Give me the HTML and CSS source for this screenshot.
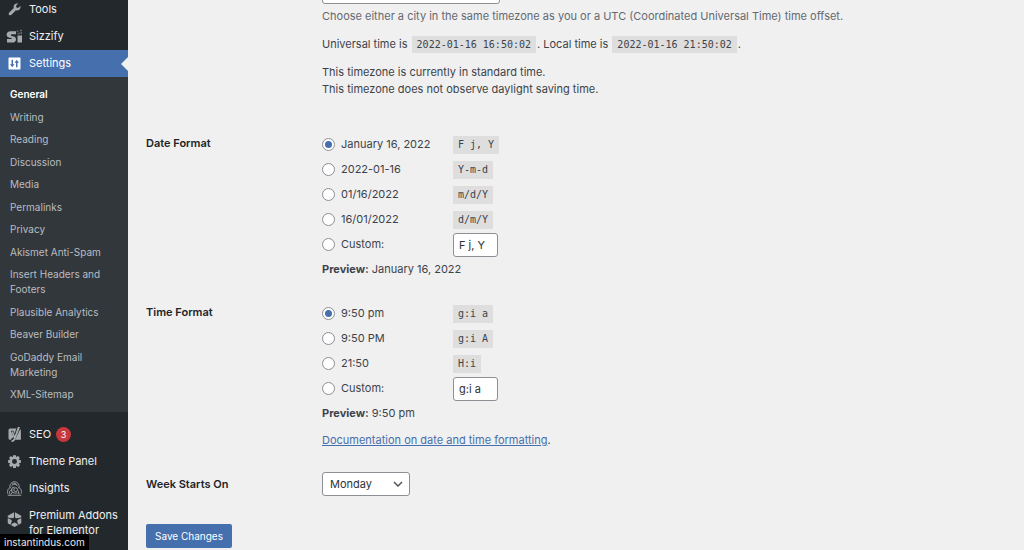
FILE: index.html
```html
<!DOCTYPE html>
<html lang="en">
<head>
<meta charset="utf-8">
<meta name="viewport" content="width=device-width, initial-scale=1">
<title>General Settings</title>
<link rel="stylesheet" href="styles.css">
</head>
<body>
<div class="admin">
  <nav class="sidebar" aria-label="Main menu">
    <a class="item" href="#"><svg class="icon" viewBox="0 0 20 20"><path d="M16.700 9.900c-1.300 1.300-3.200 1.600-4.800 1L5.600 17.200c-.8.8-2 .8-2.800 0s-.8-2 0-2.800L9.100 8.100c-.6-1.600-.3-3.500 1-4.800 1.300-1.300 3.100-1.600 4.700-1L12 5.100l.6 2.300 2.300.6 2.800-2.800c.6 1.600.3 3.400-1 4.700z"/></svg>Tools</a>
    <a class="item" href="#"><svg class="icon" viewBox="0 0 20 20"><path d="M12 7V3H5C1.500 3-.5 5-.5 7.500c0 2.500 1.700 3.600 4.500 4 1.800.3 2.400.5 2.400 1.100 0 .6-.4.800-1.200.800H0V18h6.500c3.700 0 5.500-1.800 5.500-4.500 0-2.500-1.700-3.600-4.500-4C5.700 9.200 5 9 5 8.300 5 7.500 5.500 7 6.500 7zM14 8.500h6V18h-6z"/><path class="dim" d="M13 2h2v2h-2zM17 1h3v2h-3zM14 5h3v2h-3zM18 4h2v3h-2z"/></svg>Sizzify</a>
    <a class="item current" href="#"><svg class="icon" viewBox="0 0 20 20"><path fill-rule="evenodd" d="M3 2h14q1 0 1 1v14q0 1-1 1H3q-1 0-1-1V3q0-1 1-1zM6 5v6H4l3 4 3-4H8V5zM12 15h2V9h2l-3-4-3 4h2z"/></svg>Settings</a>
    <ul class="submenu">
      <li><a class="selected" href="#">General</a></li>
      <li><a href="#">Writing</a></li>
      <li><a href="#">Reading</a></li>
      <li><a href="#">Discussion</a></li>
      <li><a href="#">Media</a></li>
      <li><a href="#">Permalinks</a></li>
      <li><a href="#">Privacy</a></li>
      <li><a href="#">Akismet Anti-Spam</a></li>
      <li><a href="#">Insert Headers and Footers</a></li>
      <li><a href="#">Plausible Analytics</a></li>
      <li><a href="#">Beaver Builder</a></li>
      <li><a href="#">GoDaddy Email Marketing</a></li>
      <li><a href="#">XML-Sitemap</a></li>
    </ul>
    <a class="item" href="#"><svg class="icon" viewBox="0 0 20 20"><path d="M4 2h8.500L10 9 8.500 5H5l3.500 8c-.5 1.500-1.300 2-2.700 2v2H4q-2 0-2-2V4q0-2 2-2zM17.500 3q1 .5 1 2v12H10.500c1-1 1.500-2 2.100-3.600z"/><path d="M14.500 0h2.800l-6 16c-1 2.700-2.300 4-5.300 4v-2.500c1.700 0 2.600-.7 3.200-2.500L5.800 6H8l2.300 5.500z"/></svg>SEO<span class="badge">3</span></a>
    <a class="item" href="#"><svg class="icon" viewBox="0 0 20 20"><path fill-rule="evenodd" d="M18.500 12V8h-2.200l-.5-1.200 1.500-1.600-2.800-2.800-1.600 1.500L12 3.400V1.500H8v2l-1.200.5-1.600-1.500-2.700 2.700L4 6.800 3.500 8h-2v4h2l.5 1.200-1.500 1.600 2.700 2.700L6.800 16l1.200.5v2h4v-2l1.200-.5 1.600 1.500 2.700-2.700-1.500-1.600.4-1.200zM10 6.700a3.300 3.300 0 1 1 0 6.600 3.300 3.300 0 0 1 0-6.600z"/></svg>Theme Panel</a>
    <a class="item" href="#"><svg class="icon line" viewBox="0 0 20 20"><path d="M4 9C3 4 7 1 10 1s7 3 6 8M7 4c2-2 5-1 6 1M6 7c1-3 6-4 8 0M1 17c-1-5 1-8 4-8M19 17c1-5-1-8-4-8M1 19h18M4 18c-2-4 0-6 3-6M10 8a4 4 0 0 0 0 8h4M7 15l-2 3M15 13l1 5"/><circle cx="11.500" cy="11.500" r="2.500"/></svg>Insights</a>
    <a class="item wrap" href="#"><svg class="icon" viewBox="0 0 20 20"><path fill-rule="evenodd" d="M10 0l9 5v10l-9 5-9-5V5zM10 5L8.500 8.200 3 8l3.500 3.500L5.500 16 10 14l4.500 2-1-4.500L17 8l-5.500.2z"/><path class="cut" d="M10 0v6M0 7.500l5 1.500M20 7.500l-5 1.500M4 19l3-5M16 19l-3-5"/></svg>Premium Addons for Elementor</a>
  </nav>

  <main class="content">
    <form>
      <div class="row">
        <div class="heading"></div>
        <div class="field">
          <select class="zone" aria-label="Timezone"><option></option></select>
          <p class="hint">Choose either a city in the same timezone as you or a UTC (Coordinated Universal Time) time offset.</p>
          <p>Universal time is <code>2022-01-16 16:50:02</code>. Local time is <code>2022-01-16 21:50:02</code>.</p>
          <p>This timezone is currently in standard time.<br>This timezone does not observe daylight saving time.</p>
        </div>
      </div>

      <div class="row dates" role="radiogroup" aria-labelledby="date-title">
        <div class="heading" id="date-title">Date Format</div>
        <div class="field">
          <div class="option"><label><input type="radio" name="date" checked>January 16, 2022</label><code>F j, Y</code></div>
          <div class="option"><label><input type="radio" name="date">2022-01-16</label><code>Y-m-d</code></div>
          <div class="option"><label><input type="radio" name="date">01/16/2022</label><code>m/d/Y</code></div>
          <div class="option"><label><input type="radio" name="date">16/01/2022</label><code>d/m/Y</code></div>
          <div class="option"><label><input type="radio" name="date">Custom:</label><input class="custom" type="text" value="F j, Y" aria-label="Custom date format"></div>
          <div class="preview"><strong>Preview:</strong> January 16, 2022</div>
        </div>
      </div>

      <div class="row times" role="radiogroup" aria-labelledby="time-title">
        <div class="heading" id="time-title">Time Format</div>
        <div class="field">
          <div class="option"><label><input type="radio" name="time" checked>9:50 pm</label><code>g:i a</code></div>
          <div class="option"><label><input type="radio" name="time">9:50 PM</label><code>g:i A</code></div>
          <div class="option"><label><input type="radio" name="time">21:50</label><code>H:i</code></div>
          <div class="option"><label><input type="radio" name="time">Custom:</label><input class="custom" type="text" value="g:i a" aria-label="Custom time format"></div>
          <div class="preview"><strong>Preview:</strong> 9:50 pm</div>
          <p class="docs"><a href="#">Documentation on date and time formatting</a>.</p>
        </div>
      </div>

      <div class="row week">
        <label class="heading" for="week">Week Starts On</label>
        <div class="field"><select id="week"><option>Monday</option></select></div>
      </div>

      <button class="save" type="submit">Save Changes</button>
    </form>
  </main>
</div>
<div class="status">instantindus.com</div>
</body>
</html>
```
FILE: styles.css
```css
* {
  box-sizing: border-box;
}

body {
  margin: 0;
  height: 100vh;
  overflow: hidden;
  background: #f0f0f0;
  color: #3c434a;
  font: 11px/17px Inter, sans-serif;
}

.admin {
  display: flex;
  min-height: 100vh;
}

.sidebar {
  flex: 0 0 128px;
  background: #23282d;
}

.item {
  display: flex;
  align-items: center;
  gap: 7px;
  min-height: 27px;
  padding: 0 8px 0 7px;
  color: #f0f0f1;
  font-size: 11px;
  line-height: 15px;
  text-decoration: none;
}

.item:first-child {
  margin-top: -4px;
}

.icon {
  flex: none;
  width: 15px;
  height: 15px;
  overflow: visible;
  fill: #a7aaad;
}

.icon .dim {
  opacity: 0.5;
}

.icon .cut {
  stroke: #23282d;
  stroke-width: 1.2;
}

.icon.line {
  fill: none;
  stroke: #a7aaad;
  stroke-width: 1.2;
}

.current {
  position: relative;
  background: #466fae;
  color: #fff;
}

.current .icon {
  fill: #fff;
}

.current::after {
  content: "";
  position: absolute;
  right: 0;
  top: 7px;
  border: 7px solid transparent;
  border-left-width: 0;
  border-right-color: #f0f0f0;
}

.submenu {
  margin: 0 0 9px;
  padding: 6px 0;
  list-style: none;
  background: #32373c;
}

.submenu a {
  display: block;
  padding: 4px 16px 3px 10px;
  color: #b9bdc1;
  font-size: 10px;
  line-height: 15px;
  text-decoration: none;
}

.submenu li:nth-child(odd) a {
  padding-bottom: 4px;
}

.submenu .selected {
  color: #fff;
  font-weight: 600;
}

.badge {
  margin-left: -2px;
  width: 15px;
  border-radius: 8px;
  background: #c5383b;
  color: #fff;
  font-size: 9px;
  text-align: center;
}

.wrap {
  align-items: flex-start;
  padding-top: 6px;
}

.wrap .icon {
  margin-top: 4px;
}

.content {
  flex: 1;
  margin-top: -20px;
  padding: 0 18px;
}

.row {
  display: grid;
  grid-template-columns: 176px 1fr;
}

.heading {
  color: #1d2327;
  font-weight: 600;
}

p {
  margin: 0 0 11px;
}

.hint {
  margin-top: 4px;
  color: #646970;
}

code {
  padding: 3px 5px;
  background: #dedede;
  font: 10px/12px "DejaVu Sans Mono", monospace;
}

p code {
  margin: 0 1px;
}

select {
  appearance: none;
  display: block;
  width: 88px;
  height: 24px;
  padding: 0 7px;
  border: 1px solid #8c8f94;
  border-radius: 3px;
  background: #fff;
  color: #2c3338;
  font: 11px/17px Inter, sans-serif;
}

.zone {
  width: 178px;
}

.dates {
  margin-top: 23px;
}

.dates .heading,
.times .heading {
  padding-top: 3px;
}

.option {
  display: grid;
  grid-template-columns: 131px 1fr;
  align-items: center;
  justify-items: start;
  height: 25px;
}

.option label {
  display: flex;
  align-items: center;
  gap: 6px;
}

input[type="radio"] {
  appearance: none;
  display: grid;
  place-items: center;
  width: 13px;
  height: 13px;
  margin: 0;
  border: 1px solid #8c8f94;
  border-radius: 50%;
  background: #fff;
}

input[type="radio"]:checked::before {
  content: "";
  width: 7px;
  height: 7px;
  border-radius: 50%;
  background: #466fae;
}

.custom {
  width: 45px;
  height: 24px;
  padding: 0 5px;
  border: 1px solid #8c8f94;
  border-radius: 3px;
  background: #fff;
  color: #2c3338;
  font: 11px/17px Inter, sans-serif;
}

.preview {
  padding-top: 4px;
}

.times {
  margin-top: 23px;
}

.docs {
  margin: 10px 0 0;
}

.docs a {
  color: #466fae;
}

.week {
  align-items: center;
  margin-top: 23px;
}

#week {
  background: #fff url("data:image/svg+xml,%3Csvg xmlns='http://www.w3.org/2000/svg' viewBox='0 0 10 6'%3E%3Cpath d='M1 1l4 4 4-4' fill='none' stroke='%23555' stroke-width='1.500'/%3E%3C/svg%3E") no-repeat right 6px center / 10px 6px;
}

.save {
  height: 24px;
  margin-top: 28px;
  padding: 0 9px;
  border: 0;
  border-radius: 2px;
  background: #466fae;
  color: #fff;
  font: 10px/17px Inter, sans-serif;
}

.status {
  position: fixed;
  left: 0;
  bottom: 0;
  padding: 0 4px;
  border-top-right-radius: 2px;
  background: #000;
  color: #e8e8e8;
  font-size: 10px;
  line-height: 16px;
}
```
